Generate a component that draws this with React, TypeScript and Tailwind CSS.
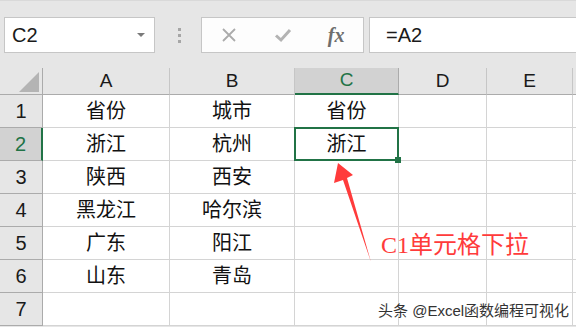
import React from "react";

const cols = ["A", "B", "C", "D", "E"];
const data: string[][] = [
  ["省份", "城市", "省份"],
  ["浙江", "杭州", "浙江"],
  ["陕西", "西安", ""],
  ["黑龙江", "哈尔滨", ""],
  ["广东", "阳江", ""],
  ["山东", "青岛", ""],
  ["", "", ""],
];

export default function App() {
  return (
    <div className="relative w-[576px] h-[327px] overflow-hidden bg-[#e6e6e6] font-['Liberation_Sans','Noto_Sans_CJK_SC',sans-serif] text-[#1a1a1a]">
      {/* top bar */}
      <div className="h-[68px] flex items-start pt-[16px] border-t border-[#d9d9d9]">
        <div className="ml-[4px] w-[151px] h-[36px] bg-white border border-[#c6c6c6] flex items-center justify-between pl-[7px] pr-[9px]">
          <span className="text-[20px] leading-none">C2</span>
          <span className="w-0 h-0 border-l-[4px] border-r-[4px] border-t-[4px] border-l-transparent border-r-transparent border-t-[#7a7a7a]" />
        </div>
        <div className="w-[46px] h-[36px] flex flex-col items-center justify-center gap-[3px] pl-[2px]">
          <span className="w-[3px] h-[3px] bg-[#a6a6a6]" />
          <span className="w-[3px] h-[3px] bg-[#a6a6a6]" />
          <span className="w-[3px] h-[3px] bg-[#a6a6a6]" />
        </div>
        <div className="w-[163px] h-[36px] bg-[#fdfdfd] border border-[#c6c6c6] flex items-center">
          <div className="w-[54px] flex justify-center">
            <svg width="16" height="16" viewBox="0 0 16 16">
              <path d="M2 2 L14 14 M14 2 L2 14" stroke="#ababab" strokeWidth="1.8" fill="none" />
            </svg>
          </div>
          <div className="w-[54px] flex justify-center">
            <svg width="18" height="16" viewBox="0 0 18 16">
              <path d="M2 8.5 L7 13 L16 3" stroke="#b3b3b3" strokeWidth="3" fill="none" />
            </svg>
          </div>
          <div className="w-[54px] flex justify-center">
            <span className="font-['Liberation_Serif',serif] italic font-bold text-[20px] leading-none text-[#6e6e6e]">fx</span>
          </div>
        </div>
        <div className="ml-[5px] flex-1 h-[36px] bg-white border-t border-b border-l border-[#c6c6c6] flex items-center pl-[16px]">
          <span className="text-[20px] leading-none">=A2</span>
        </div>
      </div>

      {/* grid */}
      <div className="grid grid-cols-[43px_127px_125px_104px_88px_86px_1fr] grid-rows-[27px_repeat(7,33px)] bg-white">
        {/* header row */}
        <div className="bg-[#e6e6e6] border-r border-b border-[#ababab] flex items-end justify-end pr-[3px] pb-[2px]">
          <svg width="20" height="20" viewBox="0 0 20 20">
            <path d="M20 0 L20 20 L0 20 Z" fill="#b4b4b4" />
          </svg>
        </div>
        {cols.map((c) =>
          c === "C" ? (
            <div key={c} className="bg-[#d2d2d2] border-r border-[#ababab] border-b-2 border-b-[#217346] flex items-center justify-center text-[19px] text-[#217346]">
              {c}
            </div>
          ) : (
            <div key={c} className="bg-[#e6e6e6] border-r border-r-[#c6c6c6] border-b border-b-[#ababab] flex items-center justify-center text-[19px]">
              {c}
            </div>
          )
        )}
        <div className="bg-[#e6e6e6] border-b border-[#ababab]" />

        {data.map((row, ri) => (
          <React.Fragment key={ri}>
            {ri === 1 ? (
              <div className="bg-[#d2d2d2] border-r-2 border-r-[#217346] border-b border-b-[#ababab] flex items-center justify-center text-[20px] text-[#217346]">
                {ri + 1}
              </div>
            ) : (
              <div className="bg-[#e6e6e6] border-r border-b border-[#ababab] flex items-center justify-center text-[20px]">
                {ri + 1}
              </div>
            )}
            {[0, 1, 2, 3, 4].map((ci) => (
              <div key={ci} className="relative border-r border-b border-[#d4d4d4] flex items-center justify-center text-[20px] text-[#111]">
                {row[ci] ?? ""}
                {ri === 1 && ci === 2 && (
                  <div className="absolute z-10 -left-px -top-px -right-px -bottom-px border-2 border-[#217346]">
                    <div className="absolute -right-[4px] -bottom-[4px] w-[6px] h-[6px] bg-[#217346]" />
                  </div>
                )}
              </div>
            ))}
            <div className="border-b border-[#d4d4d4]" />
          </React.Fragment>
        ))}
      </div>

      {/* annotation arrow */}
      <svg className="absolute left-0 top-0 pointer-events-none" width="576" height="327" viewBox="0 0 576 327">
        <polygon points="338,163 353,175 347,178 371,262 343,180 334,183" fill="#ff3b3b" />
      </svg>
      <div className="absolute left-[381px] top-[233px] text-[24px] leading-none text-[#ff3b3b] font-['Liberation_Serif','Noto_Sans_CJK_SC',serif]">
        C1单元格下拉
      </div>

      {/* watermark */}
      <div className="absolute left-[378px] top-[303px] text-[15px] leading-none text-[#333] [text-shadow:0_0_2px_#fff,0_0_2px_#fff]">
        头条 @Excel函数编程可视化
      </div>
    </div>
  );
}
